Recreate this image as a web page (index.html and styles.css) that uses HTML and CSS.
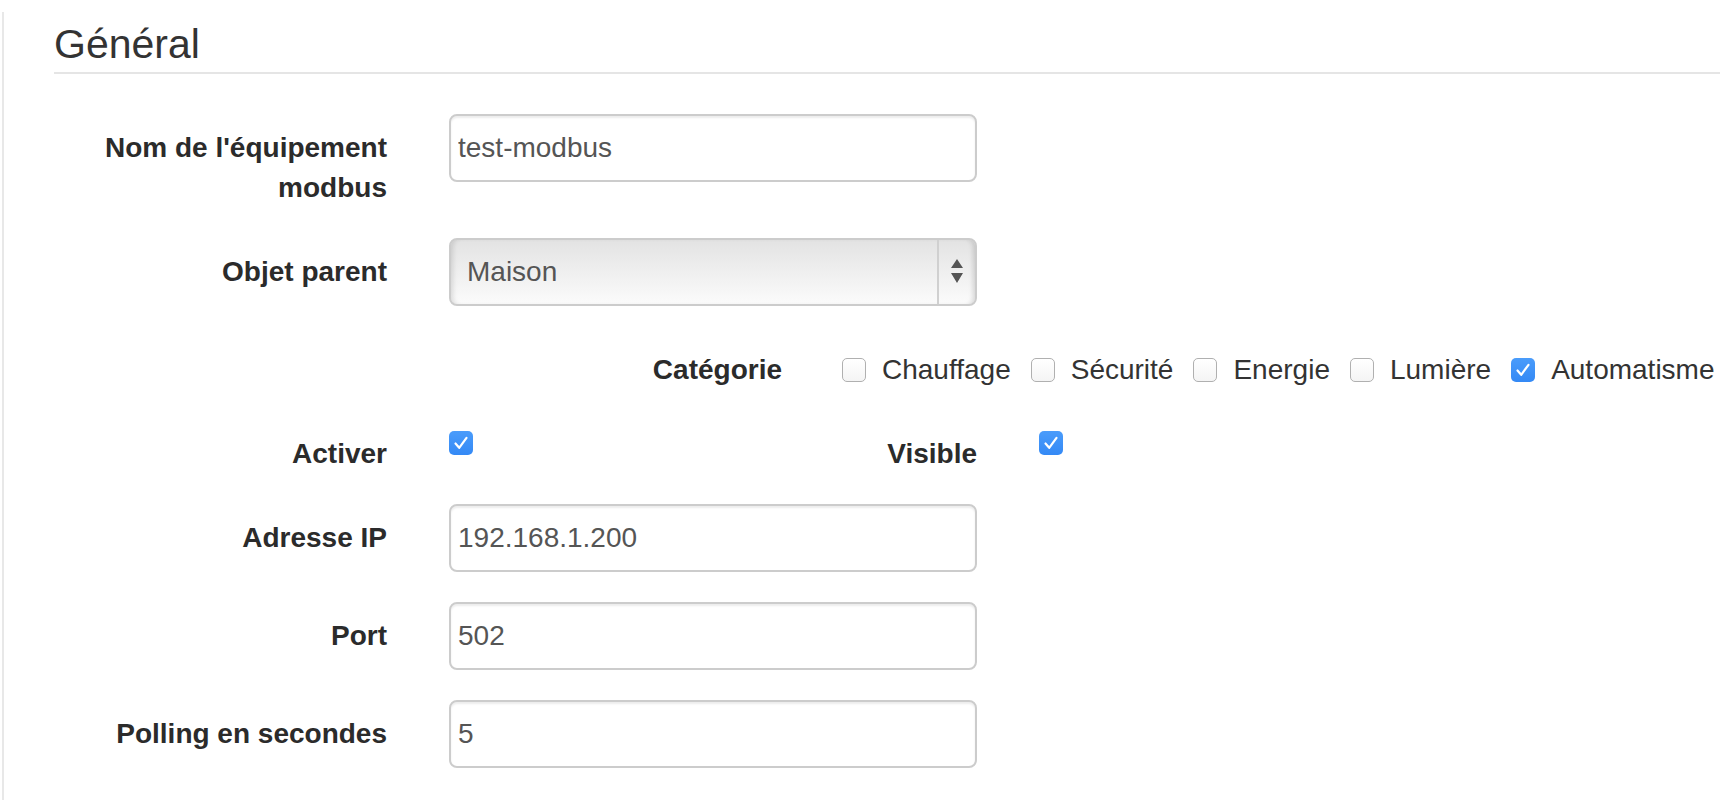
FILE: index.html
```html
<!DOCTYPE html>
<html lang="fr">
<head>
<meta charset="utf-8">
<title>Général</title>
<link rel="stylesheet" href="styles.css">
</head>
<body>
<div class="page">
  <div class="legend">Général</div>

  <div class="form-group">
    <label class="label">Nom de l'équipement modbus</label>
    <div class="control"><input class="input" type="text" value="test-modbus"></div>
  </div>

  <div class="form-group">
    <label class="label">Objet parent</label>
    <div class="control">
      <div class="select">
        <span class="select-text">Maison</span>
        <span class="select-arrows">
          <svg width="14" height="26" viewBox="0 0 14 26"><path d="M7 0 L13 9 L1 9 Z M1 14 L13 14 L7 24 Z" fill="#555"/></svg>
        </span>
      </div>
    </div>
  </div>

  <div class="form-group form-group-offset">
    <label class="label">Catégorie</label>
    <div class="cat-list">
      <span class="cat-item"><span class="cb"></span>Chauffage</span>
      <span class="cat-item"><span class="cb"></span>Sécurité</span>
      <span class="cat-item"><span class="cb"></span>Energie</span>
      <span class="cat-item"><span class="cb"></span>Lumière</span>
      <span class="cat-item"><span class="cb cb-checked"><svg width="24" height="24" viewBox="0 0 24 24"><path d="M6.5 12.5 L10.2 16.8 L17.5 6.8" fill="none" stroke="#fff" stroke-width="2.2" stroke-linecap="round" stroke-linejoin="round"/></svg></span>Automatisme</span>
    </div>
  </div>

  <div class="form-group">
    <label class="label">Activer</label>
    <div class="control control-split">
      <span class="cb cb-checked cb-top"><svg width="24" height="24" viewBox="0 0 24 24"><path d="M6.5 12.5 L10.2 16.8 L17.5 6.8" fill="none" stroke="#fff" stroke-width="2.2" stroke-linecap="round" stroke-linejoin="round"/></svg></span>
      <label class="label sublabel">Visible</label>
    </div>
    <span class="cb cb-checked cb-top cb-after"><svg width="24" height="24" viewBox="0 0 24 24"><path d="M6.5 12.5 L10.2 16.8 L17.5 6.8" fill="none" stroke="#fff" stroke-width="2.2" stroke-linecap="round" stroke-linejoin="round"/></svg></span>
  </div>

  <div class="form-group">
    <label class="label">Adresse IP</label>
    <div class="control"><input class="input" type="text" value="192.168.1.200"></div>
  </div>

  <div class="form-group">
    <label class="label">Port</label>
    <div class="control"><input class="input" type="text" value="502"></div>
  </div>

  <div class="form-group">
    <label class="label">Polling en secondes</label>
    <div class="control"><input class="input" type="text" value="5"></div>
  </div>
</div>
</body>
</html>
```

FILE: styles.css
```css
html, body {
  margin: 0;
  padding: 0;
  background: #fff;
}

body {
  font-family: "Liberation Sans", Arial, Helvetica, sans-serif;
  color: #333;
  overflow: hidden;
}

.page {
  margin: 12px 0 0 2px;
  border-left: 2px solid #e8e8e8;
  padding-left: 50px;
  min-height: 788px;
  box-sizing: border-box;
}

.legend {
  font-size: 41px;
  line-height: 56px;
  padding-top: 4px;
  color: #333;
  border-bottom: 2px solid #e5e5e5;
  margin-bottom: 40px;
}

.form-group {
  display: flex;
  align-items: flex-start;
  margin-bottom: 30px;
}

.form-group-offset {
  padding-left: 395px;
}

.label {
  width: 333px;
  flex: none;
  text-align: right;
  font-weight: bold;
  font-size: 28px;
  line-height: 40px;
  padding-top: 14px;
  color: #2b2b2b;
}

.control {
  margin-left: 62px;
  width: 528px;
  flex: none;
}

.input {
  box-sizing: border-box;
  display: block;
  width: 528px;
  height: 68px;
  margin: 0;
  border: 2px solid #ccc;
  border-radius: 8px;
  padding: 0 7px;
  font-family: "Liberation Sans", Arial, Helvetica, sans-serif;
  font-size: 28px;
  color: #555;
  background: #fff;
  box-shadow: inset 0 2px 2px rgba(0, 0, 0, 0.075);
  outline: none;
}

.select {
  box-sizing: border-box;
  display: flex;
  align-items: stretch;
  width: 528px;
  height: 68px;
  border: 2px solid #ccc;
  border-radius: 8px;
  background: linear-gradient(#e3e3e3, #fbfbfb);
  box-shadow: inset 5px 0 5px -3px rgba(0, 0, 0, 0.12), inset -5px 0 5px -3px rgba(0, 0, 0, 0.14);
  overflow: hidden;
}

.select-text {
  flex: 1;
  display: flex;
  align-items: center;
  padding-left: 16px;
  font-size: 28px;
  color: #555;
}

.select-arrows {
  width: 36px;
  border-left: 2px solid #d0d0d0;
  display: flex;
  align-items: center;
  justify-content: center;
}

.cat-list {
  display: flex;
  align-items: center;
  margin-left: 60px;
  padding-top: 14px;
  height: 40px;
}

.cat-item {
  display: flex;
  align-items: center;
  font-size: 28px;
  line-height: 40px;
  color: #333;
  margin-right: 20px;
  white-space: nowrap;
}

.cb {
  box-sizing: border-box;
  width: 24px;
  height: 24px;
  flex: none;
  border: 1.5px solid #b0b0b0;
  border-radius: 5px;
  background: linear-gradient(#ffffff, #f4f4f4);
  margin-right: 16px;
  display: inline-flex;
  align-items: center;
  justify-content: center;
}

.cb-checked {
  border: none;
  background: linear-gradient(#4a9cfb, #3489f5);
}

.cb-checked svg {
  display: block;
}

.cb-top {
  margin-top: 11px;
  margin-right: 0;
}

.control-split {
  display: flex;
  align-items: flex-start;
}

.sublabel {
  width: auto;
  margin-left: auto;
}

.cb-after {
  margin-left: 62px;
}
```
